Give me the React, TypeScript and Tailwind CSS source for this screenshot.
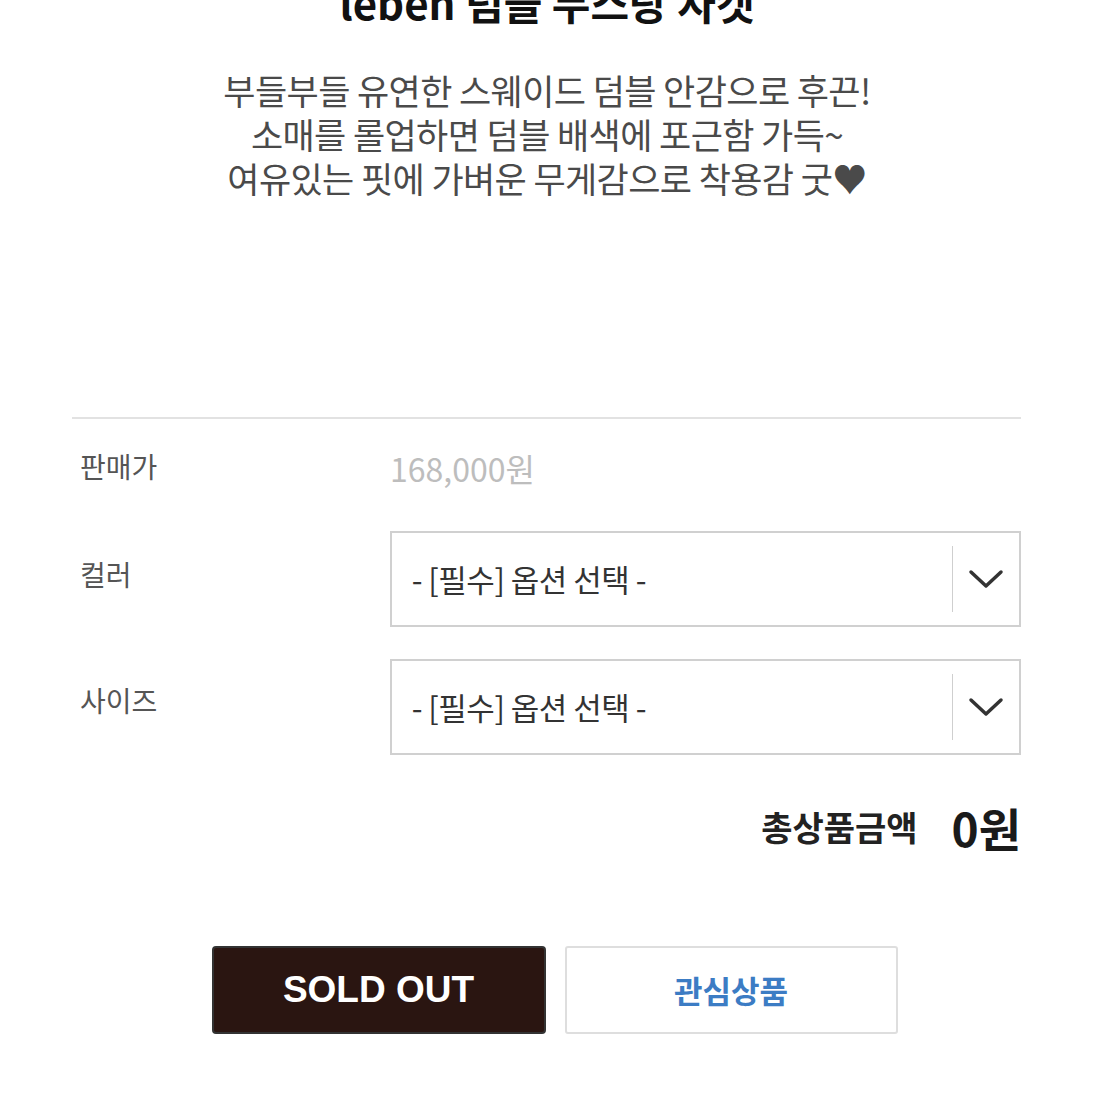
const KR = "font-['Noto_Sans_CJK_KR','Noto_Sans',sans-serif]";

function Chevron() {
  return (
    <svg width="36" height="22" viewBox="0 0 36 22" fill="none" stroke="#333" strokeWidth="3.5" strokeLinecap="round" strokeLinejoin="round">
      <path d="M3 4 18 18 33 4" />
    </svg>
  );
}

function OptionSelect() {
  return (
    <div className="flex h-[96px] w-[632px] items-center border-2 border-[#d0d0d0] bg-white">
      <span className="flex-1 pl-[20px] text-[31px] text-[#333] tracking-[-0.5px]">- [필수] 옵션 선택 -</span>
      <div className="h-[66px] w-px bg-[#cfcfcf]" />
      <div className="flex w-[66px] items-center justify-center">
        <Chevron />
      </div>
    </div>
  );
}

export default function App() {
  return (
    <div className={`h-[1094px] w-[1094px] overflow-hidden bg-white ${KR}`}>
      <h1 className="-mt-[22px] text-center text-[42px] font-bold leading-[48px] text-[#111]">
        leben 덤블 무스탕 자켓
      </h1>
      <div className="mt-[42px] text-center text-[35px] leading-[44px] text-[#4a4a4a] tracking-[-0.6px]">
        <p>부들부들 유연한 스웨이드 덤블 안감으로 후끈!</p>
        <p>소매를 롤업하면 덤블 배색에 포근함 가득~</p>
        <p>여유있는 핏에 가벼운 무게감으로 착용감 굿♥</p>
      </div>

      <div className="mx-[72px] mt-[217px] w-[949px] border-t-2 border-[#e2e2e2]">
        <div className="mt-[21px] flex items-center">
          <span className="w-[318px] pl-[8px] text-[28px] text-[#555]">판매가</span>
          <span className="mt-[4px] text-[32px] text-[#bdbdbd]">168,000원</span>
        </div>

        <div className="mt-[39px] flex items-start">
          <span className="w-[318px] pl-[8px] pt-[22px] text-[28px] text-[#555]">컬러</span>
          <OptionSelect />
        </div>

        <div className="mt-[32px] flex items-start">
          <span className="w-[318px] pl-[8px] pt-[20px] text-[28px] text-[#555]">사이즈</span>
          <OptionSelect />
        </div>

        <div className="mt-[46px] flex items-center justify-end">
          <span className="text-[34px] font-bold text-[#222]">총상품금액</span>
          <span className="ml-[34px] text-[46px] font-bold leading-none text-[#1a1a1a]">0원</span>
        </div>
      </div>

      <div className="mt-[94px] flex justify-center gap-[19px] pl-[15px]">
        <button className="flex h-[88px] w-[334px] items-center justify-center rounded-[4px] border-2 border-[#333] bg-[#2a1511] text-[37px] font-bold text-white font-['Liberation_Sans',sans-serif]">
          SOLD OUT
        </button>
        <button className="flex h-[88px] w-[333px] items-center justify-center rounded-[3px] border-2 border-[#dedede] bg-white text-[31px] font-bold text-[#3c7cc4]">
          관심상품
        </button>
      </div>
    </div>
  );
}
